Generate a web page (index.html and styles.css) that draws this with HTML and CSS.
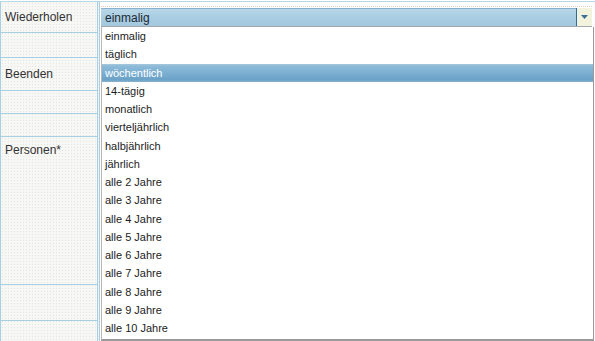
FILE: index.html
```html
<!DOCTYPE html>
<html lang="de">
<head>
<meta charset="utf-8">
<title>Wiederholen</title>
<link rel="stylesheet" href="styles.css">
</head>
<body>
<div class="sheet">
  <div class="labels">
    <div class="row r1"><span class="label">Wiederholen</span></div>
    <div class="row r2"></div>
    <div class="row r3"><span class="label">Beenden</span></div>
    <div class="row r4"></div>
    <div class="row r5"></div>
    <div class="row r6"><span class="label top">Personen*</span></div>
    <div class="row r7"></div>
    <div class="row r8"></div>
  </div>
  <div class="fields">
    <div class="field-row">
      <div class="select">
        <span class="select-value">einmalig</span>
        <span class="select-btn"><svg width="9" height="6" viewBox="0 0 9 6"><path d="M1 1h7L4.5 5z" fill="#3b6d96"/></svg></span>
      </div>
    </div>
  </div>
  <ul class="dropdown">
    <li>einmalig</li>
    <li>täglich</li>
    <li class="active">wöchentlich</li>
    <li>14-tägig</li>
    <li>monatlich</li>
    <li>vierteljährlich</li>
    <li>halbjährlich</li>
    <li>jährlich</li>
    <li>alle 2 Jahre</li>
    <li>alle 3 Jahre</li>
    <li>alle 4 Jahre</li>
    <li>alle 5 Jahre</li>
    <li>alle 6 Jahre</li>
    <li>alle 7 Jahre</li>
    <li>alle 8 Jahre</li>
    <li>alle 9 Jahre</li>
    <li>alle 10 Jahre</li>
  </ul>
</div>
</body>
</html>
```
FILE: styles.css
```css
html, body {
  margin: 0;
  padding: 0;
  background: #ffffff;
  font-family: "Liberation Sans", Arial, sans-serif;
  overflow: hidden;
}
.sheet {
  position: relative;
  width: 595px;
  height: 341px;
  overflow: hidden;
  display: flex;
}
.sheet::before {
  content: "";
  position: absolute;
  left: 0;
  right: 0;
  top: 1px;
  height: 1px;
  background: #b6d6ea;
}
.labels {
  width: 96px;
  margin-top: 2px;
  border-left: 1px solid #a9cfe5;
  border-right: 3px double #a9cfe5;
  background-color: #f7f7f5;
  background-image: radial-gradient(#e6e6e0 0.6px, transparent 0.9px);
  background-size: 3px 3px;
  display: flex;
  flex-direction: column;
}
.row {
  border-bottom: 1px solid #a9cfe5;
  padding-left: 4px;
  font-size: 12px;
  color: #333333;
  display: flex;
  align-items: center;
  box-sizing: border-box;
}
.r1 { height: 32px; }
.r2 { height: 25px; }
.r3 { height: 34px; }
.r4 { height: 24px; }
.r5 { height: 23px; }
.r6 { height: 152px; align-items: flex-start; }
.r6 .label { margin-top: 6px; }
.r7 { height: 37px; }
.r8 { height: 20px; border-bottom: none; }
.fields {
  flex: 1;
  padding-top: 6px;
  padding-left: 1px;
  padding-right: 3px;
}
.field-row {
  border-top: 1px dotted #d9c8c8;
  padding-top: 1px;
}
.select {
  height: 19px;
  box-sizing: border-box;
  border-top: 1px solid #86b2cf;
  border-bottom: 1px solid #a3a9ad;
  background: linear-gradient(#b9d7e8 0%, #a9cde2 50%, #a3c8de 100%);
  display: flex;
  align-items: center;
}
.select-value {
  flex: 1;
  padding-left: 4px;
  font-size: 12px;
  color: #1e2a33;
}
.select-btn {
  width: 15px;
  height: 18px;
  margin-top: -1px;
  border-left: 1px solid #2f6d98;
  background: #f3f2dc;
  display: flex;
  align-items: center;
  justify-content: center;
}
.dropdown {
  position: absolute;
  left: 101px;
  top: 27px;
  width: 491px;
  height: 312px;
  margin: 0;
  padding: 0;
  list-style: none;
  background: #ffffff;
  border-left: 1px solid #b8b8b8;
  border-right: 1px solid #9a9a9a;
  border-bottom: 2px solid #9a9a9a;
}
.dropdown li {
  height: 18.25px;
  line-height: 18.25px;
  padding-left: 3px;
  font-size: 11px;
  color: #1c1c1c;
  white-space: nowrap;
}
.dropdown li.active {
  color: #ffffff;
  background: linear-gradient(#a6c8de 0%, #8dbad7 12%, #7cb0d2 50%, #6aa1c6 88%, #8ab4d2 100%);
}
```
